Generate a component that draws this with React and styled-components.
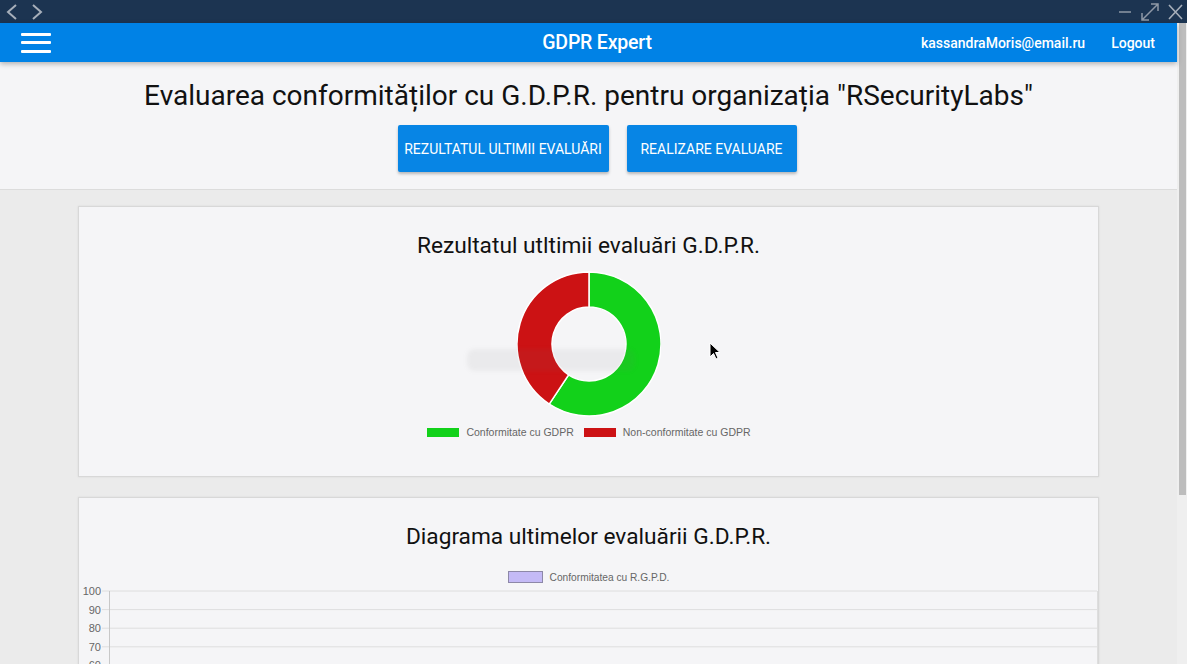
import React from "react";
import styled, { createGlobalStyle } from "styled-components";

const GlobalStyle = createGlobalStyle`
  html, body { margin: 0; padding: 0; overflow: hidden; }
  body { font-family: Roboto, "Liberation Sans", sans-serif; background: #ebebeb; }
`;

const Window = styled.div`
  width: 1187px;
  height: 664px;
  display: flex;
  flex-direction: column;
  overflow: hidden;
  position: relative;
`;

const TitleBar = styled.div`
  height: 23px;
  flex: none;
  background: #1c3451;
  display: flex;
  align-items: center;
  justify-content: space-between;
  padding: 0 4px 0 5px;
`;

const IconGroup = styled.div`
  display: flex;
  align-items: center;
  gap: ${(p) => p.gap || 8}px;
`;

const Body = styled.div`
  flex: 1;
  display: flex;
  min-height: 0;
`;

const Page = styled.div`
  flex: 1;
  display: flex;
  flex-direction: column;
  min-width: 0;
`;

const Scrollbar = styled.div`
  width: 10px;
  flex: none;
  background: #efefef;
  display: flex;
  flex-direction: column;
  align-items: center;
  padding: 0 1px 0 2px;
  box-sizing: border-box;
`;

const Thumb = styled.div`
  width: 100%;
  height: 472px;
  background: #bdbdbd;
`;

const AppBar = styled.header`
  height: 39px;
  flex: none;
  background: #0082e6;
  color: #fff;
  display: grid;
  grid-template-columns: 1fr auto 1fr;
  align-items: center;
  padding: 0 22px 0 21px;
  box-shadow: 0 2px 5px rgba(0, 0, 0, 0.28);
  position: relative;
  z-index: 2;
`;

const Burger = styled.div`
  width: 30px;
  display: flex;
  flex-direction: column;
  gap: 5.5px;
  span {
    height: 3px;
    background: #fff;
    border-radius: 1px;
  }
`;

const Brand = styled.div`
  font-size: 19.5px;
  font-weight: 500;
  letter-spacing: -0.2px;
  margin-left: 18px;
`;

const UserBox = styled.div`
  display: flex;
  justify-content: flex-end;
  align-items: center;
  gap: 26px;
  font-size: 14px;
  font-weight: 500;
`;

const Header = styled.section`
  height: 128px;
  flex: none;
  background: #f5f5f7;
  border-bottom: 1px solid #dcdcdc;
  display: flex;
  flex-direction: column;
  align-items: center;
  box-sizing: border-box;
  padding-top: 17px;
`;

const PageTitle = styled.h1`
  margin: 0;
  font-size: 28px;
  font-weight: 400;
  color: #111;
  line-height: 33px;
`;

const Actions = styled.div`
  display: flex;
  gap: 18px;
  margin-top: 13px;
  margin-left: 17px;
`;

const Button = styled.button`
  height: 47px;
  width: ${(p) => p.w}px;
  border: none;
  border-radius: 2px;
  background: #0785e5;
  color: #fff;
  font-family: Roboto, sans-serif;
  font-size: 14px;
  text-transform: uppercase;
  padding: 0;
  box-shadow: 0 2px 3px rgba(0, 0, 0, 0.25);
`;

const Main = styled.main`
  flex: 1;
  background: #ebebeb;
  padding: 16px 78px 0;
  display: flex;
  flex-direction: column;
  gap: 20px;
  min-height: 0;
`;

const Card = styled.section`
  background: #f5f5f7;
  border: 1px solid #d8d8d8;
  box-shadow: 0 0 2px rgba(0, 0, 0, 0.08);
  height: ${(p) => p.h}px;
  flex: none;
  display: flex;
  flex-direction: column;
  align-items: center;
  padding-top: 26px;
  box-sizing: border-box;
  position: relative;
`;

const CardTitle = styled.h2`
  margin: 0;
  font-size: 22.7px;
  font-weight: 400;
  color: #111;
  line-height: 26px;
`;

const DonutWrap = styled.div`
  margin-top: 12px;
  position: relative;
  width: 144px;
  height: 146px;
`;

const Tooltip = styled.div`
  position: absolute;
  left: -50px;
  top: 78px;
  width: 168px;
  height: 22px;
  border-radius: 8px;
  background: rgba(120, 120, 120, 0.08);
  filter: blur(2px);
`;

const Legend = styled.div`
  display: flex;
  align-items: center;
  gap: ${(p) => p.gap || 10}px;
  margin-top: ${(p) => p.mt}px;
  margin-left: ${(p) => p.ml || 0}px;
  font-family: "Liberation Sans", Arial, sans-serif;
  font-size: ${(p) => p.fs || 10.5}px;
  color: #666;
`;

const LegendItem = styled.div`
  display: flex;
  align-items: center;
  gap: 7px;
`;

const Swatch = styled.span`
  width: ${(p) => p.w || 32}px;
  height: ${(p) => p.h || 9}px;
  background: ${(p) => p.color};
  border: ${(p) => (p.border ? `1.5px solid ${p.border}` : "none")};
  box-sizing: border-box;
`;

const ChartArea = styled.div`
  align-self: stretch;
  margin-top: 0;
  padding: 0 1px 0 0;
`;

const Cursor = styled.svg`
  position: absolute;
  left: 709px;
  top: 342px;
  z-index: 5;
`;

function polar(cx, cy, r, deg) {
  const a = ((deg - 90) * Math.PI) / 180;
  return [cx + r * Math.cos(a), cy + r * Math.sin(a)];
}

function arcPath(cx, cy, r0, r1, a0, a1) {
  const large = a1 - a0 > 180 ? 1 : 0;
  const [x1, y1] = polar(cx, cy, r1, a0);
  const [x2, y2] = polar(cx, cy, r1, a1);
  const [x3, y3] = polar(cx, cy, r0, a1);
  const [x4, y4] = polar(cx, cy, r0, a0);
  return `M${x1} ${y1} A${r1} ${r1} 0 ${large} 1 ${x2} ${y2} L${x3} ${y3} A${r0} ${r0} 0 ${large} 0 ${x4} ${y4} Z`;
}

const Donut = () => {
  const split = 213.5;
  return (
    <svg width="144" height="146" viewBox="0 0 144 146">
      <path d={arcPath(72, 73, 37, 72, 0, split)} fill="#12d11a" stroke="#fff" strokeWidth="1.5" />
      <path d={arcPath(72, 73, 37, 72, split, 360)} fill="#cc1214" stroke="#fff" strokeWidth="1.5" />
    </svg>
  );
};

const LineChart = () => {
  const ticks = [100, 90, 80, 70, 60, 50];
  const top = 8;
  const step = 18.6;
  return (
    <svg width="1020" height="90" viewBox="0 0 1020 90" style={{ display: "block" }}>
      {ticks.map((t, i) => {
        const y = top + i * step;
        return (
          <g key={t}>
            <line x1="23" x2="1018" y1={y} y2={y} stroke="#dedede" strokeWidth="1" />
            <text x="22" y={y + 4} textAnchor="end" fontSize="11" fill="#666" fontFamily="Liberation Sans, Arial, sans-serif">
              {t}
            </text>
          </g>
        );
      })}
      <line x1="30.5" x2="30.5" y1={top} y2="90" stroke="#c8c8c8" strokeWidth="1" />
      <line x1="1018.5" x2="1018.5" y1={top} y2="90" stroke="#dedede" strokeWidth="1" />
    </svg>
  );
};

const Chevron = ({ dir }) => (
  <svg width="14" height="18" viewBox="0 0 14 18">
    <path
      d={dir === "left" ? "M11 2 L3 9 L11 16" : "M3 2 L11 9 L3 16"}
      fill="none"
      stroke="#a7afba"
      strokeWidth="2"
    />
  </svg>
);

export default function App() {
  return (
    <Window>
      <GlobalStyle />
      <TitleBar>
        <IconGroup gap={11}>
          <Chevron dir="left" />
          <Chevron dir="right" />
        </IconGroup>
        <IconGroup gap={8}>
          <svg width="14" height="18" viewBox="0 0 14 18">
            <line x1="1" x2="13" y1="9" y2="9" stroke="#8e98a6" strokeWidth="1.5" />
          </svg>
          <svg width="20" height="20" viewBox="0 0 20 20">
            <path d="M2 18 L18 2 M11 2 L18 2 L18 9 M2 11 L2 18 L9 18" fill="none" stroke="#8e98a6" strokeWidth="1.5" />
          </svg>
          <svg width="15" height="16" viewBox="0 0 15 16">
            <path d="M1 1 L14 15 M14 1 L1 15" fill="none" stroke="#a7afba" strokeWidth="1.6" />
          </svg>
        </IconGroup>
      </TitleBar>
      <Body>
        <Page>
          <AppBar>
            <Burger>
              <span />
              <span />
              <span />
            </Burger>
            <Brand>GDPR Expert</Brand>
            <UserBox>
              <span>kassandraMoris@email.ru</span>
              <span>Logout</span>
            </UserBox>
          </AppBar>
          <Header>
            <PageTitle>Evaluarea conformităților cu G.D.P.R. pentru organizația "RSecurityLabs"</PageTitle>
            <Actions>
              <Button w={211}>Rezultatul ultimii evaluări</Button>
              <Button w={170}>Realizare evaluare</Button>
            </Actions>
          </Header>
          <Main>
            <Card h={271}>
              <CardTitle>Rezultatul utltimii evaluări G.D.P.R.</CardTitle>
              <DonutWrap>
                <Tooltip />
                <Donut />
              </DonutWrap>
              <Legend gap={10} mt={9} ml={1}>
                <LegendItem>
                  <Swatch color="#12d11a" />
                  Conformitate cu GDPR
                </LegendItem>
                <LegendItem>
                  <Swatch color="#cc1214" />
                  Non-conformitate cu GDPR
                </LegendItem>
              </Legend>
            </Card>
            <Card h={200}>
              <CardTitle>Diagrama ultimelor evaluării G.D.P.R.</CardTitle>
              <Legend mt={21} fs={10.2}>
                <LegendItem>
                  <Swatch color="#c4baf6" border="#8d88a8" w={35} h={12} />
                  Conformitatea cu R.G.P.D.
                </LegendItem>
              </Legend>
              <ChartArea>
                <LineChart />
              </ChartArea>
            </Card>
          </Main>
        </Page>
        <Scrollbar>
          <Thumb />
        </Scrollbar>
      </Body>
      <Cursor width="14" height="20" viewBox="0 0 14 20">
        <path d="M1 1 L1 15 L4.5 11.5 L7 17 L9 16 L6.5 10.5 L11 10.5 Z" fill="#000" stroke="#fff" strokeWidth="1" />
      </Cursor>
    </Window>
  );
}
